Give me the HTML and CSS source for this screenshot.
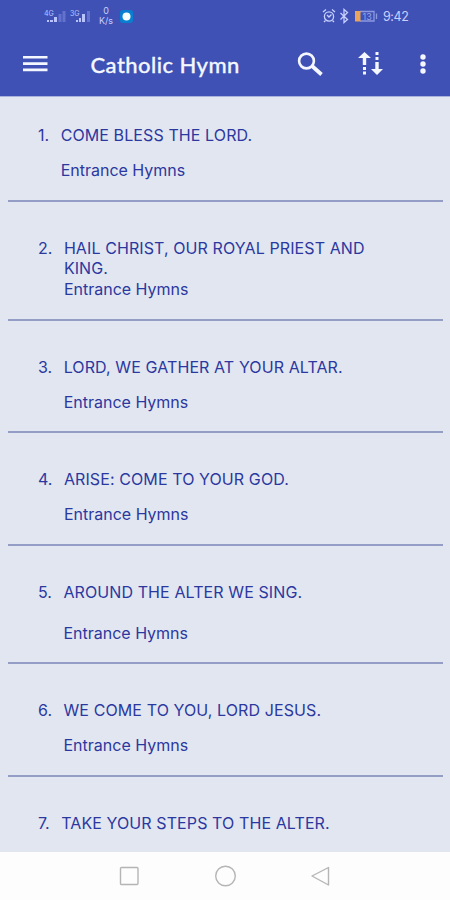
FILE: index.html
```html
<!DOCTYPE html>
<html>
<head>
<meta charset="utf-8">
<title>Catholic Hymn</title>
<link rel="stylesheet" href="styles.css">
</head>
<body>
<div class="status">
  <svg class="signals" width="50" height="20" viewBox="0 0 50 20">
    <g fill="#b9c4ff">
      <text x="0" y="7.500" class="tiny">4G</text>
      <text x="26" y="7.500" class="tiny">3G</text>
      <path d="M3 12h2v2H3zM6 12h3v2H6zM10 9h3v5h-3zM32 12h2v2h-2zM35 10h2v4h-2zM38 6h3v8h-3z"/>
    </g>
    <path fill="#6272cd" d="M14.500 6h3v8h-3zM18.500 3h3v11h-3zM43 3h3v11h-3z"/>
  </svg>
  <div class="speed">0<br>K/s</div>
  <svg class="badge" width="13" height="13" viewBox="0 0 13 13">
    <rect width="13" height="13" rx="3" fill="#087fd0"/>
    <circle cx="6.500" cy="6.500" r="4" fill="#f5ffff"/>
  </svg>
  <svg class="alarm" width="90" height="16" viewBox="0 0 90 16">
    <g fill="none" stroke="#c7d0ff" stroke-width="1.300">
      <circle cx="7" cy="8.500" r="4.600"/>
      <path d="M1 4l3-2.500M13 4l-3-2.500M5 7l2 2 2.500-2.500M3.500 12.500L2 14M10.500 12.500L12 14"/>
      <path d="M18.500 5l7 6.500-3.500 3V1.500l3.500 3-7 7"/>
      <path d="M38 3.500h14v9.500H38M54.500 5.500v5.500" stroke="#8b99e0"/>
    </g>
    <path fill="#e9a45b" d="M33 3h5.500v10.500H33z"/>
    <text x="40.500" y="11.500" class="charge">13</text>
  </svg>
  <div class="clock">9:42</div>
</div>
<div class="toolbar">
  <svg class="menu" width="25" height="18" viewBox="0 0 25 18">
    <path fill="#f4f7ff" d="M0 1h24.500v2.600H0zM0 7.300h24.500v2.600H0zM0 13.600h24.500v2.600H0z"/>
  </svg>
  <h1>Catholic Hymn</h1>
  <svg class="search" width="26" height="26" viewBox="0 0 26 26">
    <g fill="none" stroke="#f4f7ff">
      <circle cx="9.500" cy="9" r="7.400" stroke-width="2.600"/>
      <path d="M15 14L24.500 22.500" stroke-width="3.800"/>
    </g>
  </svg>
  <svg class="sort" width="26" height="24" viewBox="0 0 26 24">
    <path fill="#f4f7ff" d="M6.500 0L13 6H8.200v7H4.800V6H0zM5 15h3v3H5zM5 19.500h3v3H5zM17.500 0h3v3h-3zM17.500 5h3v3h-3zM17.300 10h3.400v7H25l-6 6-6-6h4.300z"/>
  </svg>
  <svg class="more" width="6" height="20" viewBox="0 0 6 20">
    <g fill="#f4f7ff">
      <circle cx="3" cy="3" r="2.700"/>
      <circle cx="3" cy="10" r="2.700"/>
      <circle cx="3" cy="17" r="2.700"/>
    </g>
  </svg>
</div>
<div class="list">
  <div class="item first">
    <div class="num">1.</div>
    <div><div class="name">COME BLESS THE LORD.</div><div class="kind">Entrance Hymns</div></div>
  </div>
  <div class="item">
    <div class="num">2.</div>
    <div><div class="name">HAIL CHRIST, OUR ROYAL PRIEST AND<br>KING.</div><div class="kind">Entrance Hymns</div></div>
  </div>
  <div class="item">
    <div class="num">3.</div>
    <div><div class="name">LORD, WE GATHER AT YOUR ALTAR.</div><div class="kind">Entrance Hymns</div></div>
  </div>
  <div class="item">
    <div class="num">4.</div>
    <div><div class="name">ARISE: COME TO YOUR GOD.</div><div class="kind">Entrance Hymns</div></div>
  </div>
  <div class="item tall">
    <div class="num">5.</div>
    <div><div class="name">AROUND THE ALTER WE SING.</div><div class="kind">Entrance Hymns</div></div>
  </div>
  <div class="item">
    <div class="num">6.</div>
    <div><div class="name">WE COME TO YOU, LORD JESUS.</div><div class="kind">Entrance Hymns</div></div>
  </div>
  <div class="item last">
    <div class="num">7.</div>
    <div><div class="name">TAKE YOUR STEPS TO THE ALTER.</div></div>
  </div>
</div>
<div class="navbar">
  <svg width="212" height="24" viewBox="0 0 212 24">
    <g fill="none" stroke="#b5b5b5" stroke-width="1.400">
      <rect x="1.500" y="3.500" width="17.500" height="17" rx="1"/>
      <circle cx="106.500" cy="12" r="9.800"/>
      <path d="M209.500 3.500v17.500L193 12z" stroke-linejoin="round"/>
    </g>
  </svg>
</div>
</body>
</html>
```

FILE: styles.css
```css
body { margin:0; width:450px; height:900px; overflow:hidden; display:flex; flex-direction:column; background:#e2e6f0; color:#2b38a0; font-family:Inter, "Liberation Sans", sans-serif; }
.status { height:34px; flex:none; display:flex; background:#3f51b5; color:#c7d0ff; }
.signals { margin:8px 0 0 44px; }
.tiny { font-size:7px; }
.speed { width:20px; margin:6px 0 0 2px; font-size:9px; line-height:10px; text-align:center; }
.badge { margin:10px 0 0 4px; }
.alarm { margin:8px 0 0 189px; }
.charge { font-size:9px; fill:#98a5e8; }
.clock { margin:9px 0 0 -29px; font-size:12.5px; line-height:16px; letter-spacing:-0.4px; }
.toolbar { height:62px; flex:none; display:flex; align-items:flex-start; background:#3f51b5; border-bottom:1px solid #a9b2dc; color:#f4f7ff; }
.menu { margin:21px 0 0 23px; }
h1 { width:200px; margin:17px 0 0 42.5px; font:500 22px/28px Lato, sans-serif; letter-spacing:0.45px; -webkit-text-stroke:0.3px #f4f7ff; }
.search { margin:18px 0 0 6.5px; }
.sort { margin:18px 0 0 35px; }
.more { margin:20px 0 0 36px; }
.list { flex:1; padding:0 7px 0 8px; overflow:hidden; }
.item { display:flex; gap:11.5px; padding:36px 0 19.6px 30px; border-bottom:2px solid #949dc6; font-size:16px; line-height:20px; }
.first { padding:28px 0 20px 30px; }
.last { border:0; }
.name { min-height:34px; margin-bottom:1px; white-space:nowrap; letter-spacing:0.1px; }
.tall .name { min-height:40px; }
.navbar { height:48px; flex:none; display:flex; align-items:center; justify-content:center; background:#fdfdfd; }
```
